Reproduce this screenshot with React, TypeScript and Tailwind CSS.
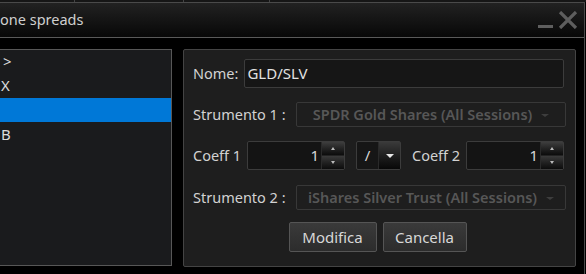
import React from 'react';

const font = { fontFamily: '"Noto Sans", "Open Sans", sans-serif' };

function SpinBox({ value }: { value: string }) {
  return (
    <div className="flex h-[29px] w-[98px] rounded-[2px] border border-[#3c3c3c] bg-[#141414]">
      <div className="flex flex-1 items-center justify-end pr-[2px] text-[15px] text-[#d8d8d8]">{value}</div>
      <div className="flex w-[23px] flex-col border-l border-[#2a2a2a]">
        <div className="flex flex-1 items-center justify-center bg-gradient-to-b from-[#3e3e3e] to-[#0c0c0c]">
          <span className="h-0 w-0 border-x-[2px] border-b-[3px] border-x-transparent border-b-[#bbb]" />
        </div>
        <div className="flex flex-1 items-center justify-center border-t border-[#222] bg-gradient-to-b from-[#3a3a3a] to-[#0c0c0c]">
          <span className="h-0 w-0 border-x-[2px] border-t-[3px] border-x-transparent border-t-[#bbb]" />
        </div>
      </div>
    </div>
  );
}

function DisabledSelect({ text }: { text: string }) {
  return (
    <div className="flex h-[25px] w-[270px] items-center justify-center gap-[9px] rounded-[2px] border border-[#383838] text-[14.5px] font-semibold text-[#575757]">
      <span>{text}</span>
      <span className="mt-[2px] h-0 w-0 border-x-[4px] border-t-[3px] border-x-transparent border-t-[#3e3e3e]" />
    </div>
  );
}

export default function App() {
  return (
    <div className="relative h-[274px] w-[586px] overflow-hidden bg-black" style={font}>
      {/* strip of whatever sits behind the window */}
      <div className="flex h-[2px] bg-[#161616]">
        <div className="w-[75px] border-r border-[#444]" />
        <div className="w-[109px] border-r border-[#444]" />
        <div className="w-[86px] border-r border-[#444]" />
      </div>

      <div className="flex h-[272px] w-[585px] flex-col border-r border-t border-[#4a4a4a] bg-black">
        {/* title bar */}
        <div className="flex h-[35px] items-center justify-between border-b border-[#5a5a5a] bg-gradient-to-b from-[#222] to-[#080808]">
          <span className="-mt-[1px] text-[14.5px] text-[#cfcfcf]">one spreads</span>
          <div className="mr-[6px] flex items-center gap-[4px]">
            <svg width="17" height="17" viewBox="0 0 17 17">
              <path d="M1 14.5 H16" stroke="#5e5e5e" strokeWidth="3" />
            </svg>
            <svg width="20" height="18" viewBox="0 0 20 18">
              <path d="M2 1 L18 17 M18 1 L2 17" stroke="#5e5e5e" strokeWidth="3.2" />
            </svg>
          </div>
        </div>

        <div className="flex gap-[11px] pt-[11px]">
          {/* list */}
          <div className="-ml-[1px] h-[217px] w-[173px] border border-[#575757] bg-[#1a1b1d] text-[15px] text-[#dcdcdc]">
            <div className="-mt-[1px] flex h-[24px] items-center pl-[3px]">&gt;</div>
            <div className="flex h-[24px] items-center pl-[1px]">X</div>
            <div className="mt-[1px] h-[24px] bg-[#0078d7]" />
            <div className="flex h-[24px] items-center pl-[1px]">B</div>
          </div>

          {/* editor */}
          <div className="flex h-[218px] w-[393px] flex-col rounded-[2px] border border-[#444] bg-[#1e1e1e] pl-[9px] pt-[9px] text-[14.5px] text-[#d2d2d2]">
            <div className="flex h-[29px] items-center gap-[6px]">
              <span>Nome:</span>
              <div className="flex h-[29px] w-[320px] items-center rounded-[2px] border border-[#3c3c3c] bg-[#161616] pl-[2px] text-[15px] text-[#e2e2e2]">
                GLD/SLV
              </div>
            </div>

            <div className="mt-[14px] flex h-[25px] items-center justify-between pr-[9px]">
              <span>Strumento 1 :</span>
              <DisabledSelect text="SPDR Gold Shares (All Sessions)" />
            </div>

            <div className="mt-[14px] flex h-[29px] items-center">
              <span className="w-[54px]">Coeff 1</span>
              <SpinBox value="1" />
              <div className="ml-[11px] flex h-[29px] w-[45px] rounded-[2px] border border-[#3c3c3c] bg-[#161616]">
                <div className="flex flex-1 items-center justify-center text-[15px] text-[#d8d8d8]">/</div>
                <div className="flex w-[22px] items-center justify-center border-l border-[#2a2a2a] bg-gradient-to-b from-[#3a3a3a] to-[#080808]">
                  <span className="h-0 w-0 border-x-[4px] border-t-[4px] border-x-transparent border-t-[#e8e8e8]" />
                </div>
              </div>
              <span className="ml-[11px] w-[54px]">Coeff 2</span>
              <SpinBox value="1" />
            </div>

            <div className="mt-[15px] flex h-[25px] items-center justify-between pr-[9px]">
              <span>Strumento 2 :</span>
              <DisabledSelect text="iShares Silver Trust (All Sessions)" />
            </div>

            <div className="mt-[12px] flex justify-center gap-[6px] pr-[13px]">
              <button className="h-[30px] w-[88px] rounded-[2px] border border-[#555] bg-gradient-to-b from-[#3a3a3a] to-[#2c2c2c] text-[15px] text-[#d8d8d8]">
                Modifica
              </button>
              <button className="h-[30px] w-[84px] rounded-[2px] border border-[#555] bg-gradient-to-b from-[#3a3a3a] to-[#2c2c2c] text-[15px] text-[#d8d8d8]">
                Cancella
              </button>
            </div>
          </div>
        </div>
      </div>
    </div>
  );
}
